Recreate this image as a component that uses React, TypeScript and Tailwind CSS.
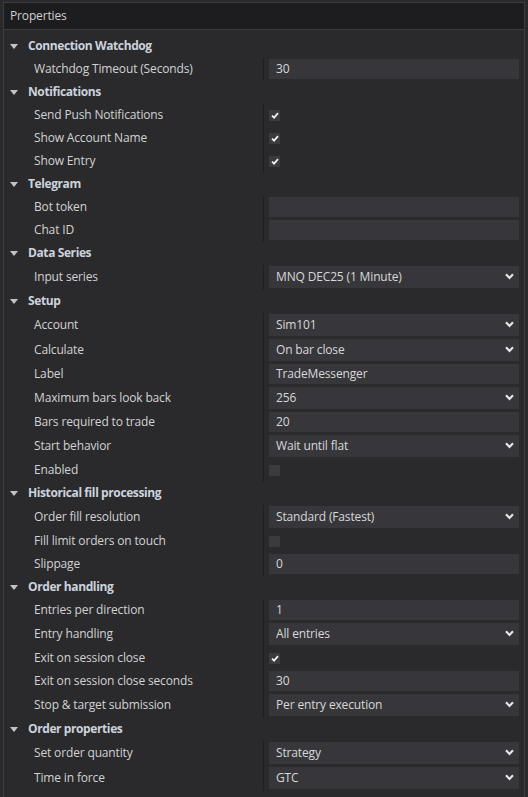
import React from "react";

type Prop =
  | { kind: "text"; label: string; value: string }
  | { kind: "select"; label: string; value: string }
  | { kind: "check"; label: string; checked: boolean };

type Group = { title: string; props: Prop[] };

const groups: Group[] = [
  { title: "Connection Watchdog", props: [{ kind: "text", label: "Watchdog Timeout (Seconds)", value: "30" }] },
  {
    title: "Notifications",
    props: [
      { kind: "check", label: "Send Push Notifications", checked: true },
      { kind: "check", label: "Show Account Name", checked: true },
      { kind: "check", label: "Show Entry", checked: true },
    ],
  },
  {
    title: "Telegram",
    props: [
      { kind: "text", label: "Bot token", value: "" },
      { kind: "text", label: "Chat ID", value: "" },
    ],
  },
  { title: "Data Series", props: [{ kind: "select", label: "Input series", value: "MNQ DEC25 (1 Minute)" }] },
  {
    title: "Setup",
    props: [
      { kind: "select", label: "Account", value: "Sim101" },
      { kind: "select", label: "Calculate", value: "On bar close" },
      { kind: "text", label: "Label", value: "TradeMessenger" },
      { kind: "select", label: "Maximum bars look back", value: "256" },
      { kind: "text", label: "Bars required to trade", value: "20" },
      { kind: "select", label: "Start behavior", value: "Wait until flat" },
      { kind: "check", label: "Enabled", checked: false },
    ],
  },
  {
    title: "Historical fill processing",
    props: [
      { kind: "select", label: "Order fill resolution", value: "Standard (Fastest)" },
      { kind: "check", label: "Fill limit orders on touch", checked: false },
      { kind: "text", label: "Slippage", value: "0" },
    ],
  },
  {
    title: "Order handling",
    props: [
      { kind: "text", label: "Entries per direction", value: "1" },
      { kind: "select", label: "Entry handling", value: "All entries" },
      { kind: "check", label: "Exit on session close", checked: true },
      { kind: "text", label: "Exit on session close seconds", value: "30" },
      { kind: "select", label: "Stop & target submission", value: "Per entry execution" },
    ],
  },
  {
    title: "Order properties",
    props: [
      { kind: "select", label: "Set order quantity", value: "Strategy" },
      { kind: "select", label: "Time in force", value: "GTC" },
    ],
  },
];

const Tri = () => (
  <svg width="8" height="5" viewBox="0 0 8 5" className="block">
    <path d="M0 0 L8 0 L4 5 Z" fill="#c4c4c4" />
  </svg>
);

const Chevron = () => (
  <svg width="9" height="7" viewBox="0 0 9 7" className="block">
    <path d="M1 1.3 L4.5 5 L8 1.3" fill="none" stroke="#e6e6e6" strokeWidth="2.2" />
  </svg>
);

const Check = () => (
  <svg width="8" height="7" viewBox="0 0 8 7" className="block">
    <path d="M1 3.6 L3.1 5.6 L7 1.2" fill="none" stroke="#f0f0f0" strokeWidth="1.8" />
  </svg>
);

function Value({ p }: { p: Prop }) {
  if (p.kind === "text") {
    return (
      <div className="h-[20px] mt-[1px] bg-[#37373b] flex items-center px-[7px] pb-[1px] text-[#d8d8d8] tracking-[-0.15px]">
        {p.value}
      </div>
    );
  }
  if (p.kind === "select") {
    return (
      <div className="h-[22px] mt-[1px] bg-[#37373b] flex items-center pl-[7px] pr-[5px] pb-[1px] text-[#d8d8d8] tracking-[-0.15px]">
        <span className="flex-1">{p.value}</span>
        <Chevron />
      </div>
    );
  }
  return (
    <div className="h-full flex items-center">
      <div className="w-[11px] h-[11px] bg-[#3b3b3f] flex items-center justify-center">{p.checked && <Check />}</div>
    </div>
  );
}

export default function App() {
  return (
    <div
      className="w-[528px] h-[797px] bg-[#2a2a2d] overflow-hidden pt-[2px] px-[3px] text-[12px]"
      style={{ fontFamily: '"Segoe UI", "Open Sans", "Noto Sans", sans-serif' }}
    >
      <div className="h-full border-x border-[#3c3c40] flex flex-col">
        <div className="h-[28px] border-y border-[#3c3c40] bg-[#1d1d1f] flex items-center pl-[6px] pb-[1px] text-[#cfcfcf] text-[12px] tracking-[-0.15px]">
          Properties
        </div>
        <div className="pt-[5px]">
          {groups.map((g) => (
            <div key={g.title}>
              <div className="h-[23px] flex items-center pb-[1px]">
                <div className="ml-[6px] w-[18px]">
                  <Tri />
                </div>
                <span className="font-bold text-[#ccd3dd] tracking-[-0.4px]">{g.title}</span>
              </div>
              {g.props.map((p) => (
                <div key={p.label} className={`flex ${p.kind === "select" ? "h-[25px]" : "h-[23px]"}`}>
                  <div className="w-[259px] flex items-center pl-[30px] pb-[1px] text-[#d2d2d2] tracking-[-0.15px]">
                    {p.label}
                  </div>
                  <div className="flex-1 border-l border-[#1f1f21] pl-[5px] pr-[5px]">
                    <Value p={p} />
                  </div>
                </div>
              ))}
            </div>
          ))}
        </div>
      </div>
    </div>
  );
}
